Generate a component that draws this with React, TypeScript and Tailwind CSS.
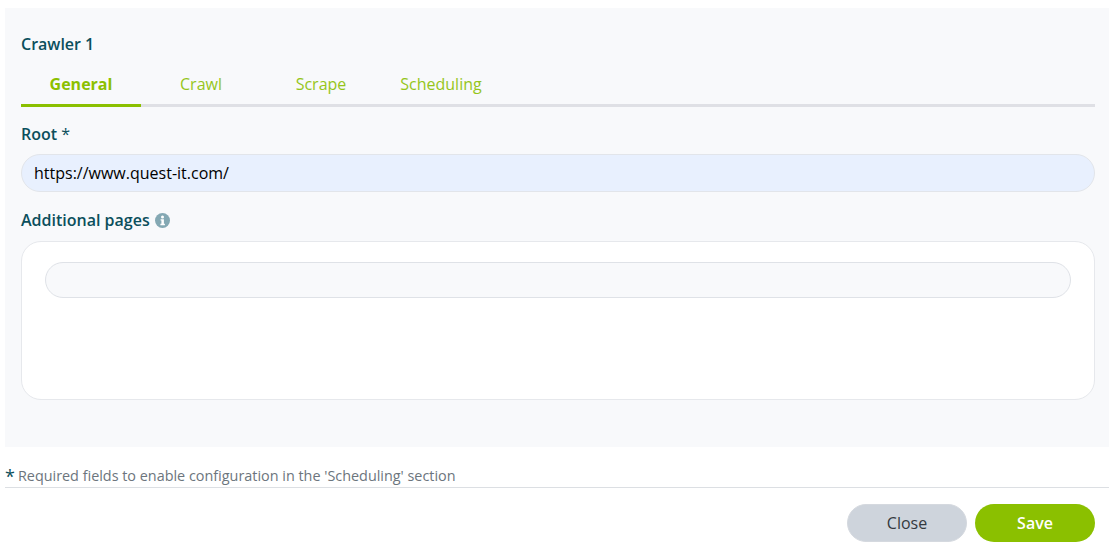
const tabs = ["General", "Crawl", "Scrape", "Scheduling"];

export default function App() {
  return (
    <div className="h-[551px] w-[1109px] overflow-hidden bg-white pl-[5px] pt-[8px] font-['Open_Sans',sans-serif]">
      <div className="flex h-[439px] flex-col bg-[#f8f9fb] pl-4 pr-[14px]">
        <div className="mt-[25px] text-base font-semibold leading-[22px] text-[#0b4f5c]">Crawler 1</div>

        <div className="mt-[11px] flex h-[41px] border-b-[3px] border-[#dfe0e5]">
          {tabs.map((t, i) => (
            <div
              key={t}
              className={
                "-mb-[3px] flex h-[41px] w-[120px] items-center justify-center border-b-[3px] pb-[3px] text-base leading-[22px] " +
                (i === 0
                  ? "border-[#8bc000] font-bold text-[#8bc000]"
                  : "border-transparent text-[#8bc000]/90")
              }
            >
              {t}
            </div>
          ))}
        </div>

        <div className="mt-[16px] text-base font-semibold leading-[22px] text-[#0b4f5c]">
          Root <span className="font-normal">*</span>
        </div>
        <input
          readOnly
          value="https://www.quest-it.com/"
          className="mt-[9px] h-[38px] w-full rounded-full border border-[#e2e5ea] bg-[#e8f0fe] px-3 text-base text-black outline-none"
        />

        <div className="mt-[17px] flex items-center gap-[5px]">
          <span className="text-base font-semibold leading-[22px] text-[#0b4f5c]">Additional pages</span>
          <svg width="15" height="15" viewBox="0 0 15 15" className="mt-[1px]">
            <circle cx="7.5" cy="7.5" r="7.5" fill="#84a8b3" />
            <circle cx="7.5" cy="4" r="1.5" fill="#fff" />
            <path d="M5.6 6.2h3.3v4.6h1v1.4H5.4v-1.4h1V7.5h-.8z" fill="#fff" />
          </svg>
        </div>

        <div className="mt-[10px] h-[159px] rounded-[20px] border border-[#e6e8ec] bg-white px-[23px] pt-[20px]">
          <div className="h-[36px] rounded-full border border-[#dfe2e7] bg-[#f8f9fb]" />
        </div>
      </div>

      <div className="mt-[18px] flex h-[23px] items-center border-b border-[#dcdfe3] text-[14.4px] leading-[20px] text-[#6c757d]">
        <span className="mr-[3px] text-[18px] leading-[20px] text-[#0b4f5c]">*</span>
        Required fields to enable configuration in the 'Scheduling' section
      </div>

      <div className="mt-[16px] flex justify-end gap-2 pr-[14px]">
        <button className="h-[38px] w-[120px] rounded-full border border-[#d5d9df] bg-[#ced4dc] text-base text-[#343a40]">
          Close
        </button>
        <button className="h-[38px] w-[120px] rounded-full bg-[#8bc000] text-base font-semibold text-white">
          Save
        </button>
      </div>
    </div>
  );
}
